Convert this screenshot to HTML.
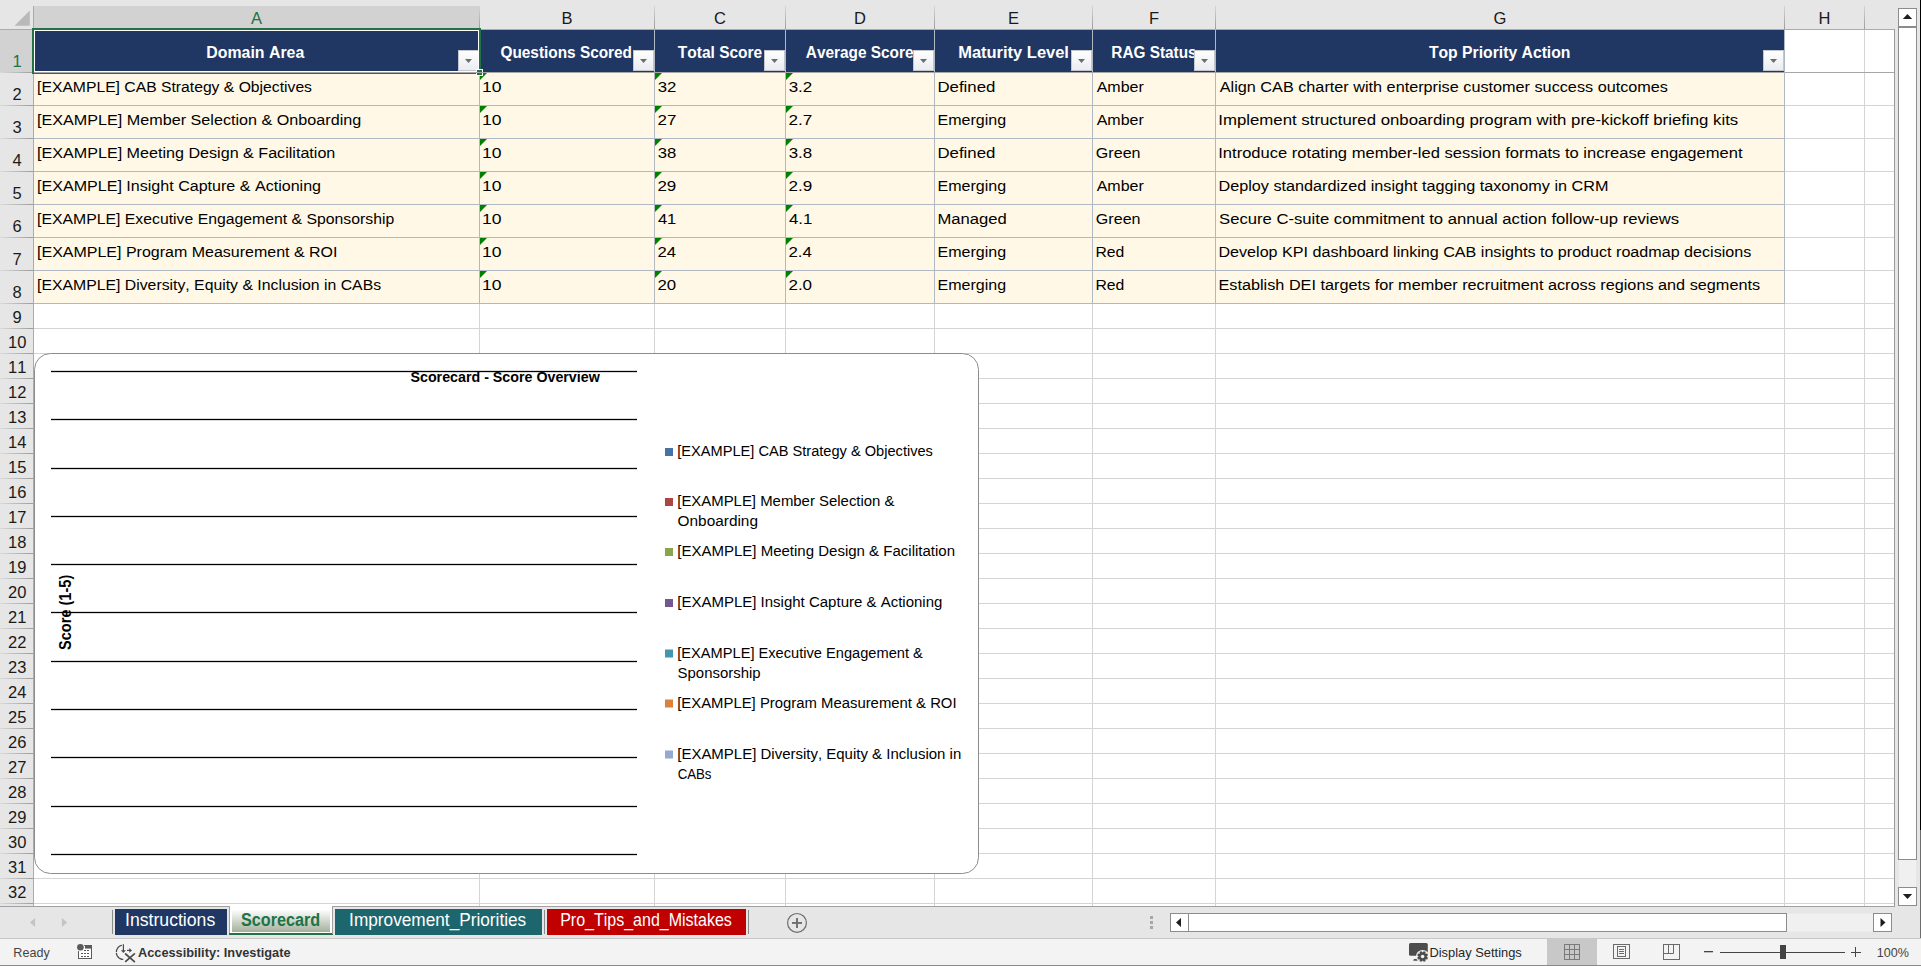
<!DOCTYPE html>
<html><head><meta charset="utf-8"><title>Scorecard</title>
<style>
html,body{margin:0;padding:0;width:1921px;height:966px;overflow:hidden;background:#e6e6e6}
svg{display:block;font-family:"Liberation Sans",sans-serif;font-kerning:none}
text{font-kerning:none}
</style></head><body>
<svg width="1921" height="966" viewBox="0 0 1921 966">
<defs>
<linearGradient id="btn" x1="0" y1="0" x2="0" y2="1"><stop offset="0" stop-color="#ffffff"/><stop offset="1" stop-color="#e9ecf1"/></linearGradient>
<linearGradient id="hdiv" gradientUnits="userSpaceOnUse" x1="0" y1="6" x2="0" y2="29"><stop offset="0" stop-color="#d6d6d6"/><stop offset="1" stop-color="#9c9c9c"/></linearGradient>
<linearGradient id="vdiv" gradientUnits="userSpaceOnUse" x1="0" y1="0" x2="33" y2="0"><stop offset="0" stop-color="#dadada"/><stop offset="1" stop-color="#9c9c9c"/></linearGradient>
<linearGradient id="tabg" x1="0" y1="0" x2="0" y2="1"><stop offset="0" stop-color="#ffffff"/><stop offset="1" stop-color="#a3b09c"/></linearGradient>
</defs>
<rect x="0" y="0" width="1921" height="966" fill="#e6e6e6"/>
<rect x="34" y="30" width="1860" height="876" fill="#ffffff"/>
<rect x="479" y="30" width="1" height="876" fill="#d4d4d4"/>
<rect x="654" y="30" width="1" height="876" fill="#d4d4d4"/>
<rect x="785" y="30" width="1" height="876" fill="#d4d4d4"/>
<rect x="934" y="30" width="1" height="876" fill="#d4d4d4"/>
<rect x="1092" y="30" width="1" height="876" fill="#d4d4d4"/>
<rect x="1215" y="30" width="1" height="876" fill="#d4d4d4"/>
<rect x="1784" y="30" width="1" height="876" fill="#d4d4d4"/>
<rect x="1864" y="30" width="1" height="876" fill="#d4d4d4"/>
<rect x="34" y="105" width="1860" height="1" fill="#d4d4d4"/>
<rect x="34" y="138" width="1860" height="1" fill="#d4d4d4"/>
<rect x="34" y="171" width="1860" height="1" fill="#d4d4d4"/>
<rect x="34" y="204" width="1860" height="1" fill="#d4d4d4"/>
<rect x="34" y="237" width="1860" height="1" fill="#d4d4d4"/>
<rect x="34" y="270" width="1860" height="1" fill="#d4d4d4"/>
<rect x="34" y="303" width="1860" height="1" fill="#d4d4d4"/>
<rect x="34" y="328" width="1860" height="1" fill="#d4d4d4"/>
<rect x="34" y="353" width="1860" height="1" fill="#d4d4d4"/>
<rect x="34" y="378" width="1860" height="1" fill="#d4d4d4"/>
<rect x="34" y="403" width="1860" height="1" fill="#d4d4d4"/>
<rect x="34" y="428" width="1860" height="1" fill="#d4d4d4"/>
<rect x="34" y="453" width="1860" height="1" fill="#d4d4d4"/>
<rect x="34" y="478" width="1860" height="1" fill="#d4d4d4"/>
<rect x="34" y="503" width="1860" height="1" fill="#d4d4d4"/>
<rect x="34" y="528" width="1860" height="1" fill="#d4d4d4"/>
<rect x="34" y="553" width="1860" height="1" fill="#d4d4d4"/>
<rect x="34" y="578" width="1860" height="1" fill="#d4d4d4"/>
<rect x="34" y="603" width="1860" height="1" fill="#d4d4d4"/>
<rect x="34" y="628" width="1860" height="1" fill="#d4d4d4"/>
<rect x="34" y="653" width="1860" height="1" fill="#d4d4d4"/>
<rect x="34" y="678" width="1860" height="1" fill="#d4d4d4"/>
<rect x="34" y="703" width="1860" height="1" fill="#d4d4d4"/>
<rect x="34" y="728" width="1860" height="1" fill="#d4d4d4"/>
<rect x="34" y="753" width="1860" height="1" fill="#d4d4d4"/>
<rect x="34" y="778" width="1860" height="1" fill="#d4d4d4"/>
<rect x="34" y="803" width="1860" height="1" fill="#d4d4d4"/>
<rect x="34" y="828" width="1860" height="1" fill="#d4d4d4"/>
<rect x="34" y="853" width="1860" height="1" fill="#d4d4d4"/>
<rect x="34" y="878" width="1860" height="1" fill="#d4d4d4"/>
<rect x="34" y="903" width="1860" height="1" fill="#d4d4d4"/>
<rect x="34" y="30" width="1750" height="42" fill="#203764"/>
<rect x="34" y="73" width="1750" height="230" fill="#fff8e6"/>
<rect x="479" y="30" width="1" height="273" fill="#b0b8c4"/>
<rect x="654" y="30" width="1" height="273" fill="#b0b8c4"/>
<rect x="785" y="30" width="1" height="273" fill="#b0b8c4"/>
<rect x="934" y="30" width="1" height="273" fill="#b0b8c4"/>
<rect x="1092" y="30" width="1" height="273" fill="#b0b8c4"/>
<rect x="1215" y="30" width="1" height="273" fill="#b0b8c4"/>
<rect x="1784" y="30" width="1" height="273" fill="#b0b8c4"/>
<rect x="34" y="105" width="1750" height="1" fill="#b0b8c4"/>
<rect x="34" y="138" width="1750" height="1" fill="#b0b8c4"/>
<rect x="34" y="171" width="1750" height="1" fill="#b0b8c4"/>
<rect x="34" y="204" width="1750" height="1" fill="#b0b8c4"/>
<rect x="34" y="237" width="1750" height="1" fill="#b0b8c4"/>
<rect x="34" y="270" width="1750" height="1" fill="#b0b8c4"/>
<rect x="34" y="303" width="1750" height="1" fill="#b0b8c4"/>
<rect x="1784" y="72" width="110" height="1" fill="#a6a6a6"/>
<rect x="1784" y="30" width="1" height="274" fill="#b0b8c4"/>
<rect x="34" y="303" width="1751" height="1" fill="#b0b8c4"/>
<rect x="34" y="6" width="445" height="23" fill="#d2d2d2"/>
<rect x="479" y="6" width="1" height="23" fill="url(#hdiv)"/>
<rect x="654" y="6" width="1" height="23" fill="url(#hdiv)"/>
<rect x="785" y="6" width="1" height="23" fill="url(#hdiv)"/>
<rect x="934" y="6" width="1" height="23" fill="url(#hdiv)"/>
<rect x="1092" y="6" width="1" height="23" fill="url(#hdiv)"/>
<rect x="1215" y="6" width="1" height="23" fill="url(#hdiv)"/>
<rect x="1784" y="6" width="1" height="23" fill="url(#hdiv)"/>
<rect x="1864" y="6" width="1" height="23" fill="url(#hdiv)"/>
<rect x="0" y="29" width="1895" height="1" fill="#ababab"/>
<rect x="0" y="30" width="33" height="42" fill="#d2d2d2"/>
<rect x="0" y="72" width="33" height="1" fill="url(#vdiv)"/>
<rect x="0" y="105" width="33" height="1" fill="url(#vdiv)"/>
<rect x="0" y="138" width="33" height="1" fill="url(#vdiv)"/>
<rect x="0" y="171" width="33" height="1" fill="url(#vdiv)"/>
<rect x="0" y="204" width="33" height="1" fill="url(#vdiv)"/>
<rect x="0" y="237" width="33" height="1" fill="url(#vdiv)"/>
<rect x="0" y="270" width="33" height="1" fill="url(#vdiv)"/>
<rect x="0" y="303" width="33" height="1" fill="url(#vdiv)"/>
<rect x="0" y="328" width="33" height="1" fill="url(#vdiv)"/>
<rect x="0" y="353" width="33" height="1" fill="url(#vdiv)"/>
<rect x="0" y="378" width="33" height="1" fill="url(#vdiv)"/>
<rect x="0" y="403" width="33" height="1" fill="url(#vdiv)"/>
<rect x="0" y="428" width="33" height="1" fill="url(#vdiv)"/>
<rect x="0" y="453" width="33" height="1" fill="url(#vdiv)"/>
<rect x="0" y="478" width="33" height="1" fill="url(#vdiv)"/>
<rect x="0" y="503" width="33" height="1" fill="url(#vdiv)"/>
<rect x="0" y="528" width="33" height="1" fill="url(#vdiv)"/>
<rect x="0" y="553" width="33" height="1" fill="url(#vdiv)"/>
<rect x="0" y="578" width="33" height="1" fill="url(#vdiv)"/>
<rect x="0" y="603" width="33" height="1" fill="url(#vdiv)"/>
<rect x="0" y="628" width="33" height="1" fill="url(#vdiv)"/>
<rect x="0" y="653" width="33" height="1" fill="url(#vdiv)"/>
<rect x="0" y="678" width="33" height="1" fill="url(#vdiv)"/>
<rect x="0" y="703" width="33" height="1" fill="url(#vdiv)"/>
<rect x="0" y="728" width="33" height="1" fill="url(#vdiv)"/>
<rect x="0" y="753" width="33" height="1" fill="url(#vdiv)"/>
<rect x="0" y="778" width="33" height="1" fill="url(#vdiv)"/>
<rect x="0" y="803" width="33" height="1" fill="url(#vdiv)"/>
<rect x="0" y="828" width="33" height="1" fill="url(#vdiv)"/>
<rect x="0" y="853" width="33" height="1" fill="url(#vdiv)"/>
<rect x="0" y="878" width="33" height="1" fill="url(#vdiv)"/>
<rect x="0" y="903" width="33" height="1" fill="url(#vdiv)"/>
<rect x="33" y="6" width="1" height="900" fill="#ababab"/>
<polygon points="14.5,25.8 29.8,25.8 29.8,10.4" fill="#b9b9b9"/>
<rect x="1894" y="29" width="1" height="878" fill="#9a9a9a"/>
<rect x="0" y="906" width="1895" height="1" fill="#a0a0a0"/>
<text x="256.50" y="24.00" font-size="16.5" fill="#217346" text-anchor="middle">A</text>
<text x="567.00" y="24.00" font-size="16.5" fill="#1a1a1a" text-anchor="middle">B</text>
<text x="720.00" y="24.00" font-size="16.5" fill="#1a1a1a" text-anchor="middle">C</text>
<text x="860.00" y="24.00" font-size="16.5" fill="#1a1a1a" text-anchor="middle">D</text>
<text x="1013.50" y="24.00" font-size="16.5" fill="#1a1a1a" text-anchor="middle">E</text>
<text x="1154.00" y="24.00" font-size="16.5" fill="#1a1a1a" text-anchor="middle">F</text>
<text x="1500.00" y="24.00" font-size="16.5" fill="#1a1a1a" text-anchor="middle">G</text>
<text x="1824.50" y="24.00" font-size="16.5" fill="#1a1a1a" text-anchor="middle">H</text>
<text x="17.20" y="66.80" font-size="16.5" fill="#217346" text-anchor="middle">1</text>
<text x="17.20" y="99.80" font-size="16.5" fill="#1a1a1a" text-anchor="middle">2</text>
<text x="17.20" y="132.80" font-size="16.5" fill="#1a1a1a" text-anchor="middle">3</text>
<text x="17.20" y="165.80" font-size="16.5" fill="#1a1a1a" text-anchor="middle">4</text>
<text x="17.20" y="198.80" font-size="16.5" fill="#1a1a1a" text-anchor="middle">5</text>
<text x="17.20" y="231.80" font-size="16.5" fill="#1a1a1a" text-anchor="middle">6</text>
<text x="17.20" y="264.80" font-size="16.5" fill="#1a1a1a" text-anchor="middle">7</text>
<text x="17.20" y="297.80" font-size="16.5" fill="#1a1a1a" text-anchor="middle">8</text>
<text x="17.20" y="322.80" font-size="16.5" fill="#1a1a1a" text-anchor="middle">9</text>
<text x="17.20" y="347.80" font-size="16.5" fill="#1a1a1a" text-anchor="middle">10</text>
<text x="17.20" y="372.80" font-size="16.5" fill="#1a1a1a" text-anchor="middle">11</text>
<text x="17.20" y="397.80" font-size="16.5" fill="#1a1a1a" text-anchor="middle">12</text>
<text x="17.20" y="422.80" font-size="16.5" fill="#1a1a1a" text-anchor="middle">13</text>
<text x="17.20" y="447.80" font-size="16.5" fill="#1a1a1a" text-anchor="middle">14</text>
<text x="17.20" y="472.80" font-size="16.5" fill="#1a1a1a" text-anchor="middle">15</text>
<text x="17.20" y="497.80" font-size="16.5" fill="#1a1a1a" text-anchor="middle">16</text>
<text x="17.20" y="522.80" font-size="16.5" fill="#1a1a1a" text-anchor="middle">17</text>
<text x="17.20" y="547.80" font-size="16.5" fill="#1a1a1a" text-anchor="middle">18</text>
<text x="17.20" y="572.80" font-size="16.5" fill="#1a1a1a" text-anchor="middle">19</text>
<text x="17.20" y="597.80" font-size="16.5" fill="#1a1a1a" text-anchor="middle">20</text>
<text x="17.20" y="622.80" font-size="16.5" fill="#1a1a1a" text-anchor="middle">21</text>
<text x="17.20" y="647.80" font-size="16.5" fill="#1a1a1a" text-anchor="middle">22</text>
<text x="17.20" y="672.80" font-size="16.5" fill="#1a1a1a" text-anchor="middle">23</text>
<text x="17.20" y="697.80" font-size="16.5" fill="#1a1a1a" text-anchor="middle">24</text>
<text x="17.20" y="722.80" font-size="16.5" fill="#1a1a1a" text-anchor="middle">25</text>
<text x="17.20" y="747.80" font-size="16.5" fill="#1a1a1a" text-anchor="middle">26</text>
<text x="17.20" y="772.80" font-size="16.5" fill="#1a1a1a" text-anchor="middle">27</text>
<text x="17.20" y="797.80" font-size="16.5" fill="#1a1a1a" text-anchor="middle">28</text>
<text x="17.20" y="822.80" font-size="16.5" fill="#1a1a1a" text-anchor="middle">29</text>
<text x="17.20" y="847.80" font-size="16.5" fill="#1a1a1a" text-anchor="middle">30</text>
<text x="17.20" y="872.80" font-size="16.5" fill="#1a1a1a" text-anchor="middle">31</text>
<text x="17.20" y="897.80" font-size="16.5" fill="#1a1a1a" text-anchor="middle">32</text>
<text x="206.34" y="58.20" font-size="16" fill="#ffffff" font-weight="bold" textLength="97.96" lengthAdjust="spacingAndGlyphs">Domain Area</text>
<text x="500.47" y="58.20" font-size="16" fill="#ffffff" font-weight="bold" textLength="131.54" lengthAdjust="spacingAndGlyphs">Questions Scored</text>
<text x="677.83" y="58.20" font-size="16" fill="#ffffff" font-weight="bold" textLength="84.40" lengthAdjust="spacingAndGlyphs">Total Score</text>
<text x="805.82" y="58.20" font-size="16" fill="#ffffff" font-weight="bold" textLength="107.71" lengthAdjust="spacingAndGlyphs">Average Score</text>
<text x="958.20" y="58.20" font-size="16" fill="#ffffff" font-weight="bold" textLength="110.77" lengthAdjust="spacingAndGlyphs">Maturity Level</text>
<text x="1111.37" y="58.20" font-size="16" fill="#ffffff" font-weight="bold" textLength="85.26" lengthAdjust="spacingAndGlyphs">RAG Status</text>
<text x="1428.92" y="58.20" font-size="16" fill="#ffffff" font-weight="bold" textLength="141.55" lengthAdjust="spacingAndGlyphs">Top Priority Action</text>
<text x="37.08" y="91.80" font-size="15.2" fill="#000000" textLength="274.89" lengthAdjust="spacingAndGlyphs">[EXAMPLE] CAB Strategy &amp; Objectives</text>
<text x="482.06" y="91.80" font-size="15.2" fill="#000000" textLength="19.52" lengthAdjust="spacingAndGlyphs">10</text>
<text x="657.66" y="91.80" font-size="15.2" fill="#000000" textLength="18.68" lengthAdjust="spacingAndGlyphs">32</text>
<text x="788.65" y="91.80" font-size="15.2" fill="#000000" textLength="23.60" lengthAdjust="spacingAndGlyphs">3.2</text>
<text x="937.42" y="91.80" font-size="15.2" fill="#000000" textLength="57.96" lengthAdjust="spacingAndGlyphs">Defined</text>
<text x="1096.67" y="91.80" font-size="15.2" fill="#000000" textLength="47.20" lengthAdjust="spacingAndGlyphs">Amber</text>
<text x="1219.77" y="91.80" font-size="15.2" fill="#000000" textLength="448.22" lengthAdjust="spacingAndGlyphs">Align CAB charter with enterprise customer success outcomes</text>
<polygon points="480,73 487,73 480,80" fill="#008000"/>
<polygon points="655,73 662,73 655,80" fill="#008000"/>
<polygon points="786,73 793,73 786,80" fill="#008000"/>
<text x="37.05" y="124.80" font-size="15.2" fill="#000000" textLength="324.19" lengthAdjust="spacingAndGlyphs">[EXAMPLE] Member Selection &amp; Onboarding</text>
<text x="482.06" y="124.80" font-size="15.2" fill="#000000" textLength="19.52" lengthAdjust="spacingAndGlyphs">10</text>
<text x="657.44" y="124.80" font-size="15.2" fill="#000000" textLength="18.91" lengthAdjust="spacingAndGlyphs">27</text>
<text x="788.44" y="124.80" font-size="15.2" fill="#000000" textLength="23.82" lengthAdjust="spacingAndGlyphs">2.7</text>
<text x="937.49" y="124.80" font-size="15.2" fill="#000000" textLength="68.55" lengthAdjust="spacingAndGlyphs">Emerging</text>
<text x="1096.67" y="124.80" font-size="15.2" fill="#000000" textLength="47.20" lengthAdjust="spacingAndGlyphs">Amber</text>
<text x="1218.25" y="124.80" font-size="15.2" fill="#000000" textLength="519.96" lengthAdjust="spacingAndGlyphs">Implement structured onboarding program with pre-kickoff briefing kits</text>
<polygon points="480,106 487,106 480,113" fill="#008000"/>
<polygon points="655,106 662,106 655,113" fill="#008000"/>
<polygon points="786,106 793,106 786,113" fill="#008000"/>
<text x="37.05" y="157.80" font-size="15.2" fill="#000000" textLength="298.30" lengthAdjust="spacingAndGlyphs">[EXAMPLE] Meeting Design &amp; Facilitation</text>
<text x="482.06" y="157.80" font-size="15.2" fill="#000000" textLength="19.52" lengthAdjust="spacingAndGlyphs">10</text>
<text x="657.66" y="157.80" font-size="15.2" fill="#000000" textLength="18.56" lengthAdjust="spacingAndGlyphs">38</text>
<text x="788.66" y="157.80" font-size="15.2" fill="#000000" textLength="23.48" lengthAdjust="spacingAndGlyphs">3.8</text>
<text x="937.42" y="157.80" font-size="15.2" fill="#000000" textLength="57.96" lengthAdjust="spacingAndGlyphs">Defined</text>
<text x="1095.89" y="157.80" font-size="15.2" fill="#000000" textLength="44.65" lengthAdjust="spacingAndGlyphs">Green</text>
<text x="1218.27" y="157.80" font-size="15.2" fill="#000000" textLength="524.25" lengthAdjust="spacingAndGlyphs">Introduce rotating member-led session formats to increase engagement</text>
<polygon points="480,139 487,139 480,146" fill="#008000"/>
<polygon points="655,139 662,139 655,146" fill="#008000"/>
<polygon points="786,139 793,139 786,146" fill="#008000"/>
<text x="37.05" y="190.80" font-size="15.2" fill="#000000" textLength="283.98" lengthAdjust="spacingAndGlyphs">[EXAMPLE] Insight Capture &amp; Actioning</text>
<text x="482.06" y="190.80" font-size="15.2" fill="#000000" textLength="19.52" lengthAdjust="spacingAndGlyphs">10</text>
<text x="657.45" y="190.80" font-size="15.2" fill="#000000" textLength="18.86" lengthAdjust="spacingAndGlyphs">29</text>
<text x="788.44" y="190.80" font-size="15.2" fill="#000000" textLength="23.77" lengthAdjust="spacingAndGlyphs">2.9</text>
<text x="937.49" y="190.80" font-size="15.2" fill="#000000" textLength="68.55" lengthAdjust="spacingAndGlyphs">Emerging</text>
<text x="1096.67" y="190.80" font-size="15.2" fill="#000000" textLength="47.20" lengthAdjust="spacingAndGlyphs">Amber</text>
<text x="1218.47" y="190.80" font-size="15.2" fill="#000000" textLength="389.96" lengthAdjust="spacingAndGlyphs">Deploy standardized insight tagging taxonomy in CRM</text>
<polygon points="480,172 487,172 480,179" fill="#008000"/>
<polygon points="655,172 662,172 655,179" fill="#008000"/>
<polygon points="786,172 793,172 786,179" fill="#008000"/>
<text x="37.07" y="223.80" font-size="15.2" fill="#000000" textLength="357.19" lengthAdjust="spacingAndGlyphs">[EXAMPLE] Executive Engagement &amp; Sponsorship</text>
<text x="482.06" y="223.80" font-size="15.2" fill="#000000" textLength="19.52" lengthAdjust="spacingAndGlyphs">10</text>
<text x="657.92" y="223.80" font-size="15.2" fill="#000000" textLength="18.39" lengthAdjust="spacingAndGlyphs">41</text>
<text x="788.92" y="223.80" font-size="15.2" fill="#000000" textLength="23.30" lengthAdjust="spacingAndGlyphs">4.1</text>
<text x="937.44" y="223.80" font-size="15.2" fill="#000000" textLength="69.34" lengthAdjust="spacingAndGlyphs">Managed</text>
<text x="1095.89" y="223.80" font-size="15.2" fill="#000000" textLength="44.65" lengthAdjust="spacingAndGlyphs">Green</text>
<text x="1219.04" y="223.80" font-size="15.2" fill="#000000" textLength="460.16" lengthAdjust="spacingAndGlyphs">Secure C-suite commitment to annual action follow-up reviews</text>
<polygon points="480,205 487,205 480,212" fill="#008000"/>
<polygon points="655,205 662,205 655,212" fill="#008000"/>
<polygon points="786,205 793,205 786,212" fill="#008000"/>
<text x="37.06" y="256.80" font-size="15.2" fill="#000000" textLength="300.42" lengthAdjust="spacingAndGlyphs">[EXAMPLE] Program Measurement &amp; ROI</text>
<text x="482.06" y="256.80" font-size="15.2" fill="#000000" textLength="19.52" lengthAdjust="spacingAndGlyphs">10</text>
<text x="657.46" y="256.80" font-size="15.2" fill="#000000" textLength="18.53" lengthAdjust="spacingAndGlyphs">24</text>
<text x="788.45" y="256.80" font-size="15.2" fill="#000000" textLength="23.44" lengthAdjust="spacingAndGlyphs">2.4</text>
<text x="937.49" y="256.80" font-size="15.2" fill="#000000" textLength="68.55" lengthAdjust="spacingAndGlyphs">Emerging</text>
<text x="1095.41" y="256.80" font-size="15.2" fill="#000000" textLength="28.91" lengthAdjust="spacingAndGlyphs">Red</text>
<text x="1218.48" y="256.80" font-size="15.2" fill="#000000" textLength="532.80" lengthAdjust="spacingAndGlyphs">Develop KPI dashboard linking CAB insights to product roadmap decisions</text>
<polygon points="480,238 487,238 480,245" fill="#008000"/>
<polygon points="655,238 662,238 655,245" fill="#008000"/>
<polygon points="786,238 793,238 786,245" fill="#008000"/>
<text x="37.07" y="289.80" font-size="15.2" fill="#000000" textLength="344.00" lengthAdjust="spacingAndGlyphs">[EXAMPLE] Diversity, Equity &amp; Inclusion in CABs</text>
<text x="482.06" y="289.80" font-size="15.2" fill="#000000" textLength="19.52" lengthAdjust="spacingAndGlyphs">10</text>
<text x="657.45" y="289.80" font-size="15.2" fill="#000000" textLength="18.70" lengthAdjust="spacingAndGlyphs">20</text>
<text x="788.45" y="289.80" font-size="15.2" fill="#000000" textLength="23.62" lengthAdjust="spacingAndGlyphs">2.0</text>
<text x="937.49" y="289.80" font-size="15.2" fill="#000000" textLength="68.55" lengthAdjust="spacingAndGlyphs">Emerging</text>
<text x="1095.41" y="289.80" font-size="15.2" fill="#000000" textLength="28.91" lengthAdjust="spacingAndGlyphs">Red</text>
<text x="1218.47" y="289.80" font-size="15.2" fill="#000000" textLength="541.62" lengthAdjust="spacingAndGlyphs">Establish DEI targets for member recruitment across regions and segments</text>
<polygon points="480,271 487,271 480,278" fill="#008000"/>
<polygon points="655,271 662,271 655,278" fill="#008000"/>
<polygon points="786,271 793,271 786,278" fill="#008000"/>
<rect x="458.5" y="50.5" width="20" height="20" fill="url(#btn)" stroke="#c3c6cc" stroke-width="1"/>
<polygon points="465,59 472,59 468.5,63" fill="#6d6d6d"/>
<rect x="633.5" y="50.5" width="20" height="20" fill="url(#btn)" stroke="#c3c6cc" stroke-width="1"/>
<polygon points="640,59 647,59 643.5,63" fill="#6d6d6d"/>
<rect x="764.5" y="50.5" width="20" height="20" fill="url(#btn)" stroke="#c3c6cc" stroke-width="1"/>
<polygon points="771,59 778,59 774.5,63" fill="#6d6d6d"/>
<rect x="913.5" y="50.5" width="20" height="20" fill="url(#btn)" stroke="#c3c6cc" stroke-width="1"/>
<polygon points="920,59 927,59 923.5,63" fill="#6d6d6d"/>
<rect x="1071.5" y="50.5" width="20" height="20" fill="url(#btn)" stroke="#c3c6cc" stroke-width="1"/>
<polygon points="1078,59 1085,59 1081.5,63" fill="#6d6d6d"/>
<rect x="1194.5" y="50.5" width="20" height="20" fill="url(#btn)" stroke="#c3c6cc" stroke-width="1"/>
<polygon points="1201,59 1208,59 1204.5,63" fill="#6d6d6d"/>
<rect x="1763.5" y="50.5" width="20" height="20" fill="url(#btn)" stroke="#c3c6cc" stroke-width="1"/>
<polygon points="1770,59 1777,59 1773.5,63" fill="#6d6d6d"/>
<rect x="33" y="29" width="447" height="44" fill="none" stroke="#217346" stroke-width="2"/>
<rect x="34.5" y="30.5" width="444" height="41" fill="none" stroke="#ffffff" stroke-width="1"/>
<rect x="476" y="69" width="7" height="7" fill="#ffffff"/>
<rect x="477" y="70" width="5" height="5" fill="#217346"/>
<rect x="34" y="72" width="1750" height="1" fill="#a6a6a6"/>
<rect x="34.5" y="353.5" width="944" height="520" rx="16" ry="16" fill="#ffffff" stroke="#8c8c8c" stroke-width="1"/>
<rect x="51" y="370.85" width="586" height="1.3" fill="#000000"/>
<rect x="51" y="418.85" width="586" height="1.3" fill="#000000"/>
<rect x="51" y="467.85" width="586" height="1.3" fill="#000000"/>
<rect x="51" y="515.85" width="586" height="1.3" fill="#000000"/>
<rect x="51" y="563.85" width="586" height="1.3" fill="#000000"/>
<rect x="51" y="611.85" width="586" height="1.3" fill="#000000"/>
<rect x="51" y="660.85" width="586" height="1.3" fill="#000000"/>
<rect x="51" y="708.85" width="586" height="1.3" fill="#000000"/>
<rect x="51" y="756.85" width="586" height="1.3" fill="#000000"/>
<rect x="51" y="805.85" width="586" height="1.3" fill="#000000"/>
<rect x="51" y="853.85" width="586" height="1.3" fill="#000000"/>
<text x="410.49" y="382.00" font-size="15" fill="#000000" font-weight="bold" textLength="189.28" lengthAdjust="spacingAndGlyphs">Scorecard - Score Overview</text>
<g transform="translate(70.5,612.5) rotate(-90)">
<text x="-37.42" y="0" font-size="16" font-weight="bold" fill="#000" textLength="75.14" lengthAdjust="spacingAndGlyphs">Score (1-5)</text>
</g>
<rect x="665" y="448" width="8" height="8" fill="#4673a6"/>
<text x="677.26" y="456.20" font-size="15.5" fill="#000000" textLength="255.67" lengthAdjust="spacingAndGlyphs">[EXAMPLE] CAB Strategy &amp; Objectives</text>
<rect x="665" y="498" width="8" height="8" fill="#aa4644"/>
<text x="677.24" y="506.20" font-size="15.5" fill="#000000" textLength="217.30" lengthAdjust="spacingAndGlyphs">[EXAMPLE] Member Selection &amp;</text>
<text x="677.57" y="526.40" font-size="15.5" fill="#000000" textLength="80.42" lengthAdjust="spacingAndGlyphs">Onboarding</text>
<rect x="665" y="548" width="8" height="8" fill="#88a54e"/>
<text x="677.23" y="556.20" font-size="15.5" fill="#000000" textLength="277.85" lengthAdjust="spacingAndGlyphs">[EXAMPLE] Meeting Design &amp; Facilitation</text>
<rect x="665" y="599" width="8" height="8" fill="#71588f"/>
<text x="677.23" y="607.20" font-size="15.5" fill="#000000" textLength="265.14" lengthAdjust="spacingAndGlyphs">[EXAMPLE] Insight Capture &amp; Actioning</text>
<rect x="665" y="649.5" width="8" height="8" fill="#4297ae"/>
<text x="677.26" y="657.70" font-size="15.5" fill="#000000" textLength="245.57" lengthAdjust="spacingAndGlyphs">[EXAMPLE] Executive Engagement &amp;</text>
<text x="677.62" y="677.90" font-size="15.5" fill="#000000" textLength="83.01" lengthAdjust="spacingAndGlyphs">Sponsorship</text>
<rect x="665" y="699.5" width="8" height="8" fill="#da823c"/>
<text x="677.24" y="707.70" font-size="15.5" fill="#000000" textLength="279.33" lengthAdjust="spacingAndGlyphs">[EXAMPLE] Program Measurement &amp; ROI</text>
<rect x="665" y="750.5" width="8" height="8" fill="#94a8d0"/>
<text x="677.23" y="758.70" font-size="15.5" fill="#000000" textLength="284.04" lengthAdjust="spacingAndGlyphs">[EXAMPLE] Diversity, Equity &amp; Inclusion in</text>
<text x="677.63" y="778.90" font-size="15.5" fill="#000000" textLength="33.85" lengthAdjust="spacingAndGlyphs">CABs</text>
<rect x="1898.5" y="8.5" width="18" height="18" fill="#ffffff" stroke="#8c8c8c" stroke-width="1"/>
<polygon points="1902.8,18.9 1912.2,18.9 1907.5,14" fill="#1e1e1e"/>
<rect x="1898.5" y="27.5" width="18" height="832" fill="#ffffff" stroke="#8c8c8c" stroke-width="1"/>
<rect x="1899" y="860" width="17" height="27" fill="#f0f0f0"/>
<rect x="1898.5" y="887.5" width="18" height="18" fill="#ffffff" stroke="#8c8c8c" stroke-width="1"/>
<polygon points="1902.8,894 1912.2,894 1907.5,898.9" fill="#1e1e1e"/>
<rect x="1920" y="0" width="1" height="830" fill="#000000"/>
<rect x="1920" y="830" width="1" height="136" fill="#6d6d6d"/>
<rect x="0" y="938" width="1921" height="1" fill="#c8c8c8"/>
<polygon points="35.1,918 35.1,926.9 29.9,922.5" fill="#c4c4c4"/>
<polygon points="61.9,918 61.9,926.9 67.1,922.5" fill="#c4c4c4"/>
<rect x="112" y="910" width="1" height="24" fill="#8a8a8a"/>
<rect x="115" y="909" width="112" height="26" fill="#203764"/>
<rect x="229" y="906" width="1" height="28" fill="#a0a0a0"/>
<rect x="230" y="906" width="102" height="27" fill="#ffffff"/>
<rect x="232" y="909.5" width="98" height="22.5" fill="url(#tabg)"/>
<rect x="229" y="933" width="104" height="2" fill="#217346"/>
<rect x="332" y="906" width="1" height="28" fill="#a0a0a0"/>
<rect x="335" y="909" width="207" height="26" fill="#1e666e"/>
<rect x="544" y="910" width="1" height="24" fill="#8a8a8a"/>
<rect x="547" y="909" width="199" height="26" fill="#c00000"/>
<rect x="748" y="910" width="1" height="24" fill="#8a8a8a"/>
<text x="125.07" y="925.90" font-size="17.5" fill="#ffffff" textLength="90.16" lengthAdjust="spacingAndGlyphs">Instructions</text>
<text x="240.93" y="925.70" font-size="17.5" fill="#217346" font-weight="bold" textLength="79.34" lengthAdjust="spacingAndGlyphs">Scorecard</text>
<text x="349.11" y="925.90" font-size="17.5" fill="#ffffff" textLength="177.11" lengthAdjust="spacingAndGlyphs">Improvement_Priorities</text>
<text x="560.19" y="925.90" font-size="17.5" fill="#ffffff" textLength="171.59" lengthAdjust="spacingAndGlyphs">Pro_Tips_and_Mistakes</text>
<circle cx="797" cy="922.9" r="9.4" fill="none" stroke="#6e6e6e" stroke-width="1.2"/>
<rect x="792" y="922" width="10" height="1.9" fill="#6e6e6e"/>
<rect x="796.05" y="918" width="1.9" height="10" fill="#6e6e6e"/>
<rect x="1150" y="916" width="3" height="3" fill="#a6a6a6"/>
<rect x="1150" y="921" width="3" height="3" fill="#a6a6a6"/>
<rect x="1150" y="926" width="3" height="3" fill="#a6a6a6"/>
<rect x="1170.5" y="913.5" width="721" height="18" fill="#f0f0f0"/>
<rect x="1170.5" y="913.5" width="18" height="18" fill="#ffffff" stroke="#8c8c8c" stroke-width="1"/>
<polygon points="1181,918 1181,927 1176,922.5" fill="#1e1e1e"/>
<rect x="1188.5" y="913.5" width="598" height="18" fill="#ffffff" stroke="#8c8c8c" stroke-width="1"/>
<rect x="1873.5" y="913.5" width="18" height="18" fill="#ffffff" stroke="#8c8c8c" stroke-width="1"/>
<polygon points="1880.5,918 1880.5,927 1885.5,922.5" fill="#1e1e1e"/>
<rect x="0" y="939" width="1921" height="26" fill="#f3f3f3"/>
<rect x="0" y="965" width="1921" height="1" fill="#8a8a8a"/>
<text x="13.37" y="956.80" font-size="13.5" fill="#444444" textLength="36.36" lengthAdjust="spacingAndGlyphs">Ready</text>
<rect x="78.5" y="945.5" width="13" height="13" fill="#ffffff" stroke="#5a5a5a" stroke-width="1"/>
<rect x="85" y="945" width="7" height="3.6" fill="#5a5a5a"/>
<circle cx="80.4" cy="947.3" r="4.2" fill="#f3f3f3"/>
<circle cx="80.4" cy="947.3" r="3.3" fill="#5a5a5a"/>
<rect x="84" y="950" width="2" height="1" fill="#5a5a5a"/>
<rect x="87" y="950" width="2" height="1" fill="#5a5a5a"/>
<rect x="81" y="953" width="2" height="1" fill="#5a5a5a"/>
<rect x="84" y="953" width="2" height="1" fill="#5a5a5a"/>
<rect x="87" y="953" width="2" height="1" fill="#5a5a5a"/>
<rect x="81" y="956" width="2" height="1" fill="#5a5a5a"/>
<rect x="84" y="956" width="2" height="1" fill="#5a5a5a"/>
<rect x="87" y="956" width="2" height="1" fill="#5a5a5a"/>
<path d="M121.4,945.4 A7,7 0 0 0 116.4,951.6 M116.4,953.4 A7,7 0 0 0 122.7,959.4" fill="none" stroke="#4a4a4a" stroke-width="1.3" stroke-dasharray="2.2,0.8" stroke-linecap="round"/>
<path d="M123.4,944.2 V951" fill="none" stroke="#4a4a4a" stroke-width="1.2"/>
<polygon points="120.9,950.2 125.9,950.2 123.4,953" fill="#4a4a4a"/>
<path d="M127,950.4 H130" fill="none" stroke="#4a4a4a" stroke-width="1.2"/>
<polygon points="129.3,947.9 132,950.4 129.3,952.8" fill="#4a4a4a"/>
<path d="M125.6,954 L134.4,961.6 M134.4,953.9 L125.7,961.4" stroke="#4a4a4a" stroke-width="1.7" fill="none" stroke-linecap="round"/>
<text x="137.98" y="957.00" font-size="13.5" fill="#333333" font-weight="bold" textLength="152.55" lengthAdjust="spacingAndGlyphs">Accessibility: Investigate</text>
<rect x="1409" y="943" width="18.8" height="12.8" rx="1.6" fill="#4d4d4d"/>
<path d="M1413.2,960.8 L1414,959 H1418 V960.8 Z" fill="#4d4d4d"/>
<circle cx="1422.6" cy="956.5" r="6.6" fill="#f3f3f3"/>
<polygon points="1422.60,952.50 1423.79,951.13 1425.56,951.86 1425.43,953.67 1425.43,953.67 1427.24,953.54 1427.97,955.31 1426.60,956.50 1426.60,956.50 1427.97,957.69 1427.24,959.46 1425.43,959.33 1425.43,959.33 1425.56,961.14 1423.79,961.87 1422.60,960.50 1422.60,960.50 1421.41,961.87 1419.64,961.14 1419.77,959.33 1419.77,959.33 1417.96,959.46 1417.23,957.69 1418.60,956.50 1418.60,956.50 1417.23,955.31 1417.96,953.54 1419.77,953.67 1419.77,953.67 1419.64,951.86 1421.41,951.13 1422.60,952.50" fill="#4d4d4d"/>
<circle cx="1422.6" cy="956.5" r="1.8" fill="#f3f3f3"/>
<text x="1429.44" y="957.30" font-size="13.5" fill="#262626" textLength="92.32" lengthAdjust="spacingAndGlyphs">Display Settings</text>
<rect x="1547" y="939" width="50" height="26" fill="#c8c8c8"/>
<g fill="none" stroke="#7a7a7a" stroke-width="1"><rect x="1564.5" y="944.5" width="15" height="15"/><path d="M1569.5,944.5 V959.5 M1574.5,944.5 V959.5 M1564.5,949.5 H1579.5 M1564.5,954.5 H1579.5"/></g>
<g fill="none" stroke="#6a6a6a" stroke-width="1"><rect x="1613.5" y="944.5" width="16" height="14"/><rect x="1617.5" y="946.5" width="8" height="10"/><path d="M1619,949.5 H1624 M1619,951.5 H1624 M1619,953.5 H1624"/></g>
<g fill="none" stroke="#6a6a6a" stroke-width="1"><rect x="1663.5" y="944.5" width="16" height="15"/><path d="M1663.5,953.5 H1673.5 V944.5 M1668.5,944.5 V953.5"/></g>
<rect x="1704" y="951" width="9" height="1.3" fill="#444"/>
<rect x="1720" y="952" width="125" height="1" fill="#444"/>
<rect x="1780" y="945" width="6" height="14" fill="#444"/>
<rect x="1851" y="952" width="10" height="1" fill="#444"/>
<rect x="1855" y="947" width="1" height="10" fill="#444"/>
<text x="1876.84" y="956.50" font-size="13.5" fill="#444444" textLength="32.10" lengthAdjust="spacingAndGlyphs">100%</text>
</svg>
</body></html>
